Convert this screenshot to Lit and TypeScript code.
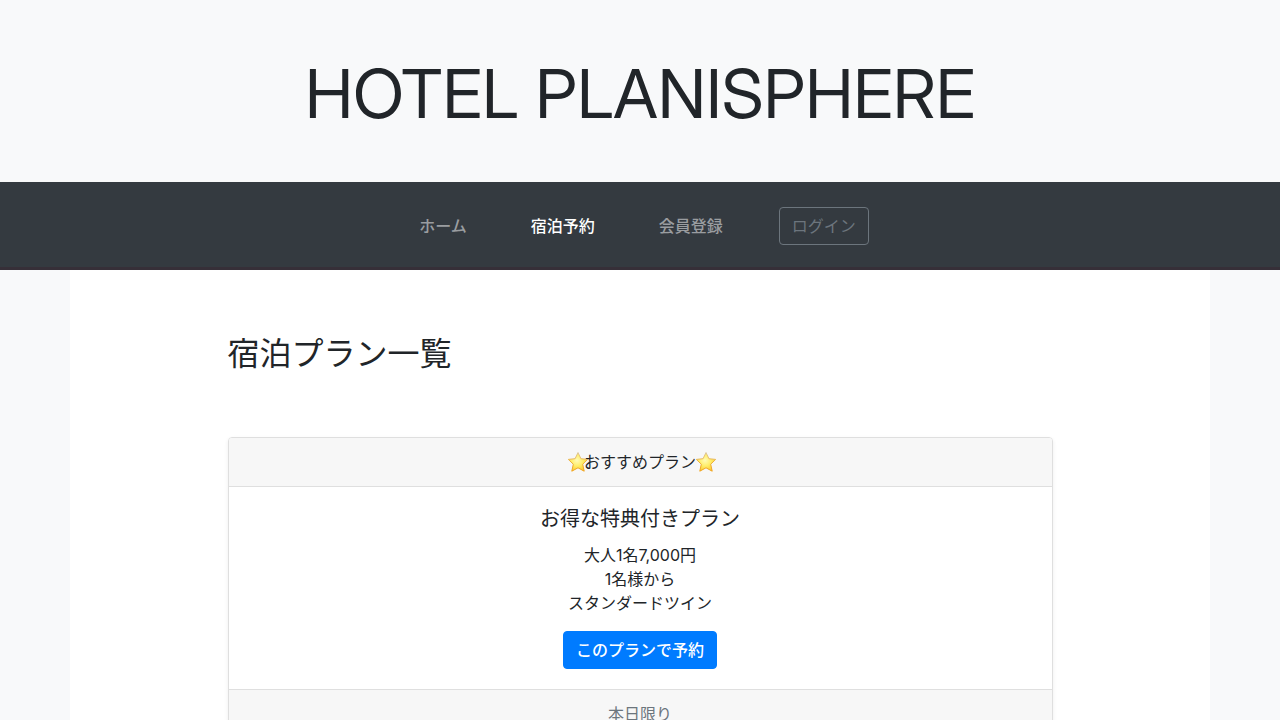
import { LitElement, html, css, svg } from "lit";
import { customElement } from "lit/decorators.js";

@customElement("plan-star")
class PlanStar extends LitElement {
  static styles = css`
    :host { display: inline-block; width: 20px; height: 20px; margin-right: -4px; vertical-align: -4px; }
    .star { display: block; width: 100%; height: 100%; }
  `;
  render() {
    return html`<svg class="star" viewBox="0 0 20 20" aria-hidden="true">
      <defs>
        <linearGradient id="edge" x1="0" y1="0" x2="0" y2="1">
          <stop offset="0" stop-color="#dcc9a4" />
          <stop offset="0.5" stop-color="#edb13c" />
          <stop offset="1" stop-color="#f0a21c" />
        </linearGradient>
        <radialGradient id="face" cx="0.45" cy="0.42" r="0.6">
          <stop offset="0" stop-color="#fffbb8" />
          <stop offset="0.5" stop-color="#ffee6a" />
          <stop offset="1" stop-color="#fcc92f" />
        </radialGradient>
      </defs>
      ${svg`<path d="M10 0.5 L12.9 6.7 L19.7 7.4 L14.7 12.2 L16.2 19.2 L10 15.8 L3.8 19.2 L5.3 12.2 L0.3 7.4 L7.1 6.7 Z" fill="url(#face)" stroke="url(#edge)" stroke-width="1" stroke-linejoin="round" />`}
    </svg>`;
  }
}

@customElement("app-root")
export class AppRoot extends LitElement {
  static styles = css`
    :host {
      display: block;
      min-height: 100vh;
      background: #f8f9fa;
      color: #212529;
      font: 400 16px/24px Inter, "Noto Sans CJK JP", sans-serif;
    }
    *, *::before, *::after { box-sizing: border-box; }
    .masthead { padding: 52px 16px 48px; text-align: center; }
    .brand {
      margin: 0;
      font-family: "Inter Display", Inter, sans-serif;
      font-size: 68px;
      line-height: 82px;
      font-weight: 400;
      font-variation-settings: "opsz" 32;
    }
    .navbar {
      display: flex;
      justify-content: center;
      background: #343a40;
      box-shadow: inset 0 -3px 0 #362f38;
      padding: 24px 16px;
    }
    .nav { display: flex; align-items: center; }
    .link { padding: 8px 32px; color: #9a9da0; font-weight: 500; text-decoration: none; }
    .active { color: #fff; }
    .login {
      font: inherit;
      color: #6c757d;
      background: transparent;
      border: 1px solid #6c757d;
      border-radius: 4px;
      padding: 6px 12px;
      margin: 0 24px;
    }
    .container { max-width: 1140px; margin: 0 auto; background: #fff; padding: 64px 0; }
    .content { width: 75%; margin: 0 auto; padding: 0 15px; }
    .title { margin: 0 0 63px; font-size: 32px; line-height: 40px; font-weight: 400; }
    .card {
      border: 1px solid #dfdfdf;
      border-radius: 4px;
      box-shadow: 0 2px 4px rgba(0, 0, 0, 0.075);
      text-align: center;
      overflow: hidden;
    }
    .band { background: #f7f7f7; padding: 12px 20px; }
    .head { border-bottom: 1px solid #dfdfdf; }
    .foot { border-top: 1px solid #dfdfdf; color: #6c757d; }
    .body { padding: 20px; }
    .plan { margin: 0 0 12px; font-size: 20px; line-height: 24px; font-weight: 400; }
    .details { list-style: none; margin: 0 0 16px; padding: 0; }
    .reserve {
      display: inline-block;
      background: #007bff;
      color: #fff;
      border: 1px solid #007bff;
      border-radius: 4px;
      padding: 6px 12px;
      font-weight: 500;
      text-decoration: none;
      vertical-align: middle;
    }
  `;

  render() {
    return html`
      <header class="masthead"><h1 class="brand">HOTEL PLANISPHERE</h1></header>
      <nav class="navbar">
        <div class="nav">
          <a class="link" href="#home">ホーム</a>
          <a class="link active" href="#plans" aria-current="page">宿泊予約</a>
          <a class="link" href="#signup">会員登録</a>
          <button class="login" type="button">ログイン</button>
        </div>
      </nav>
      <main class="container">
        <div class="content">
          <h2 class="title">宿泊プラン一覧</h2>
          <article class="card">
            <div class="band head"><plan-star></plan-star>おすすめプラン<plan-star></plan-star></div>
            <div class="body">
              <h3 class="plan">お得な特典付きプラン</h3>
              <ul class="details">
                <li>大人1名7,000円</li>
                <li>1名様から</li>
                <li>スタンダードツイン</li>
              </ul>
              <a class="reserve" href="#reserve">このプランで予約</a>
            </div>
            <div class="band foot">本日限り</div>
          </article>
        </div>
      </main>
    `;
  }
}
